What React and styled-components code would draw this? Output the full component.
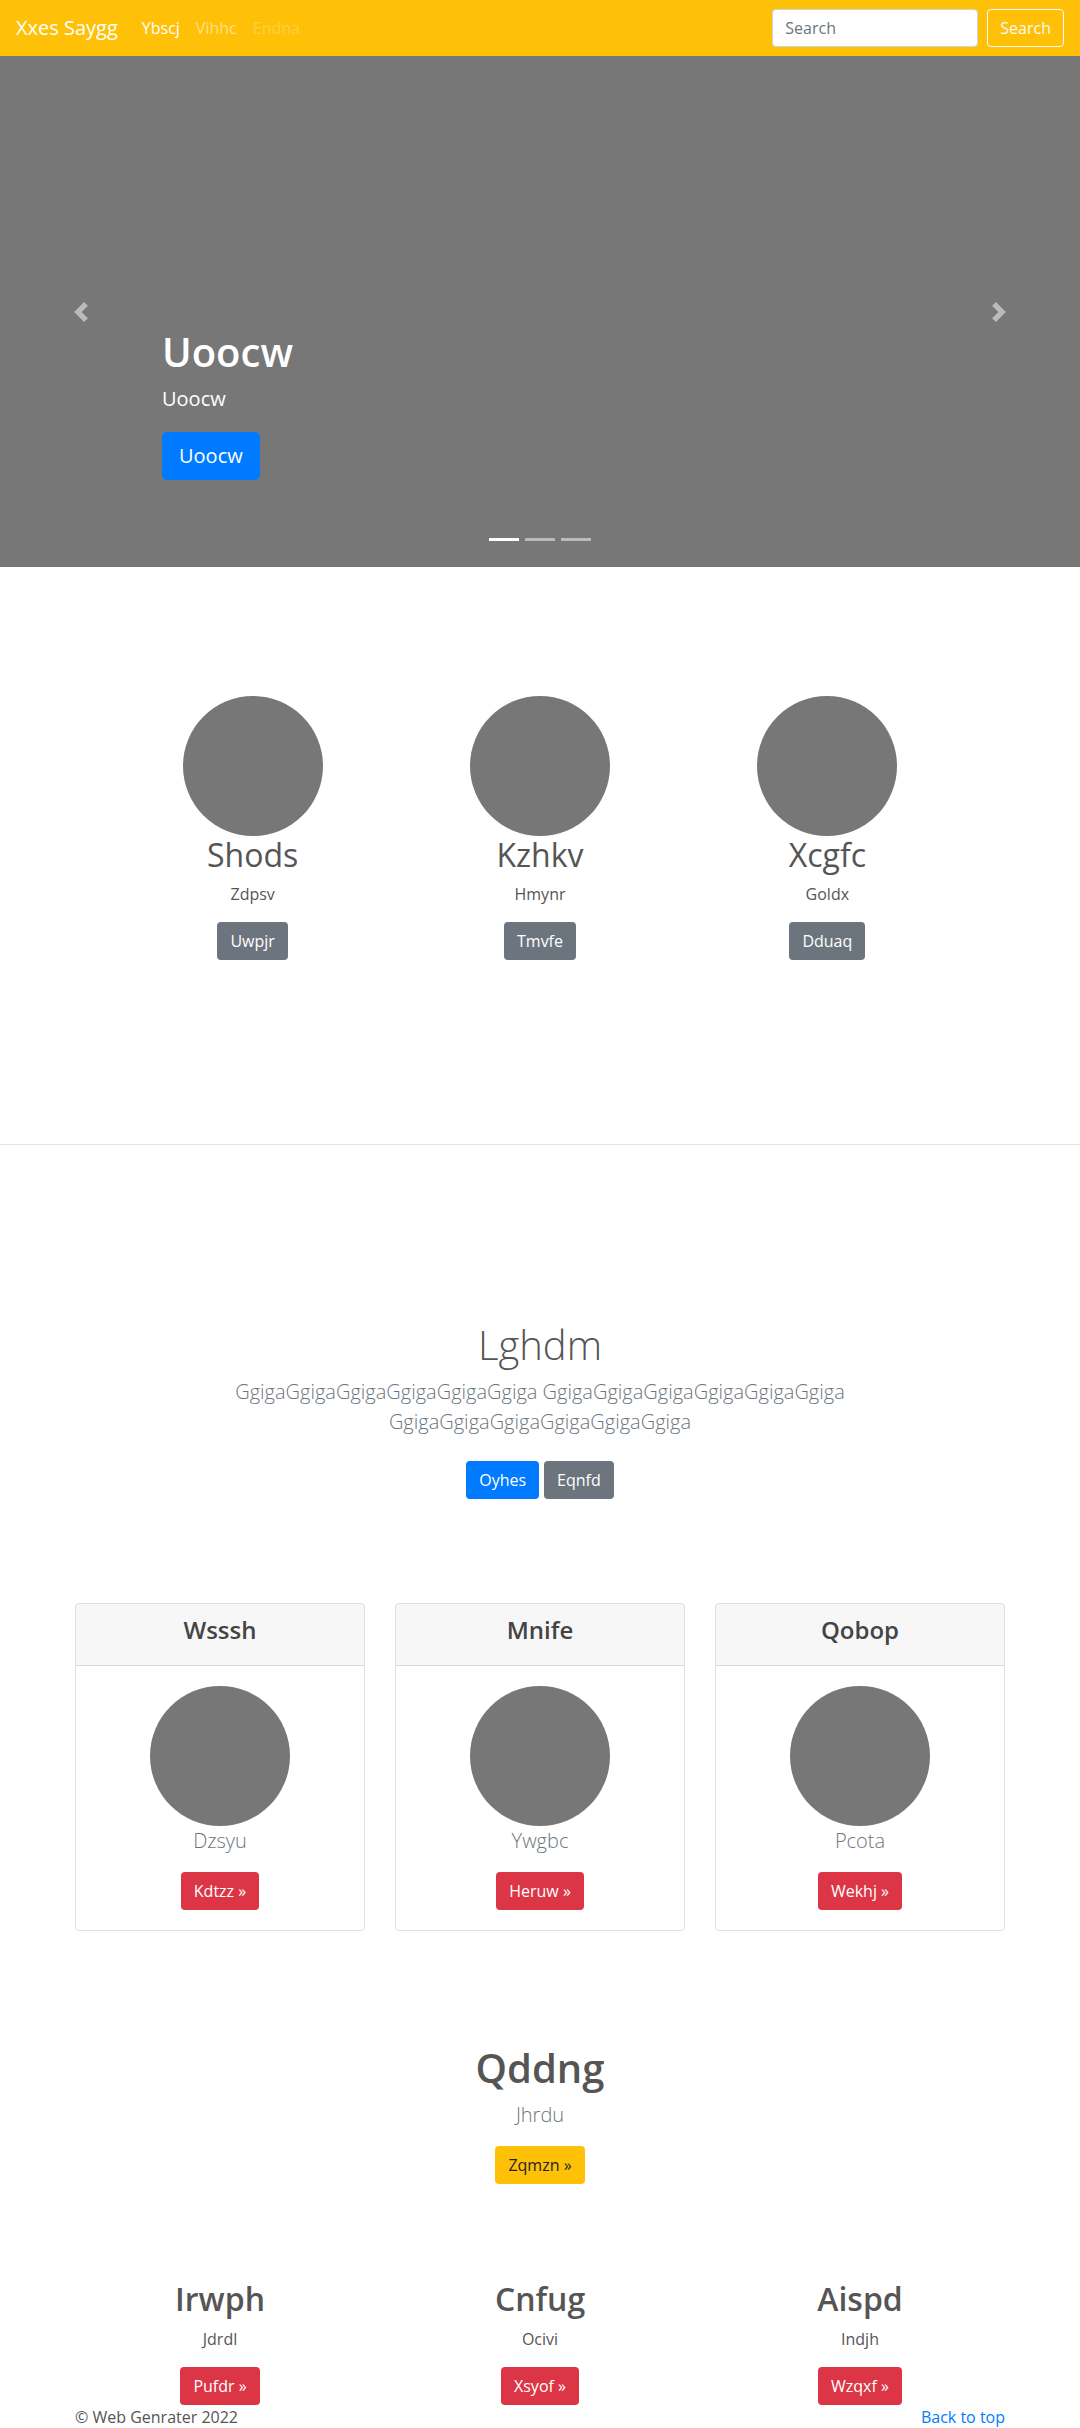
import React from 'react';
import styled, { createGlobalStyle } from 'styled-components';

const GlobalStyle = createGlobalStyle`
  body {
    margin: 0;
    font-family: "Open Sans", "Noto Sans", "Liberation Sans", sans-serif;
    color: #555;
    background: #fff;
  }
  * { box-sizing: border-box; }
`;

const variants = {
  primary: { bg: '#007bff', fg: '#fff' },
  secondary: { bg: '#6c757d', fg: '#fff' },
  danger: { bg: '#dc3545', fg: '#fff' },
  warning: { bg: '#ffc107', fg: '#212529' },
};

const App = () => {
  return (
    <>
      <GlobalStyle />
      <Navbar>
        <Brand href="#">Xxes Saygg</Brand>
        <NavLinks>
          <NavLink href="#" $state="active">Ybscj</NavLink>
          <NavLink href="#">Vihhc</NavLink>
          <NavLink href="#" $state="disabled">Endna</NavLink>
        </NavLinks>
        <SearchForm onSubmit={(e) => e.preventDefault()}>
          <SearchInput type="text" placeholder="Search" />
          <OutlineButton type="submit">Search</OutlineButton>
        </SearchForm>
      </Navbar>

      <Carousel>
        <Control>
          <svg width="20" height="20" viewBox="0 0 8 8" fill="#fff">
            <path d="M5.25 0l-4 4 4 4 1.5-1.5L4.25 4l2.5-2.5L5.25 0z" />
          </svg>
        </Control>
        <Caption>
          <CaptionTitle>Uoocw</CaptionTitle>
          <CaptionText>Uoocw</CaptionText>
          <Button $variant="primary" $size="lg">Uoocw</Button>
        </Caption>
        <Control>
          <svg width="20" height="20" viewBox="0 0 8 8" fill="#fff">
            <path d="M2.75 0l-1.5 1.5L3.75 4l-2.5 2.5L2.75 8l4-4-4-4z" />
          </svg>
        </Control>
        <Indicators>
          <Indicator $active />
          <Indicator />
          <Indicator />
        </Indicators>
      </Carousel>

      <Marketing>
        {[
          ['Shods', 'Zdpsv', 'Uwpjr'],
          ['Kzhkv', 'Hmynr', 'Tmvfe'],
          ['Xcgfc', 'Goldx', 'Dduaq'],
        ].map(([name, sub, btn]) => (
          <Feature key={name}>
            <Circle />
            <FeatureName>{name}</FeatureName>
            <FeatureText>{sub}</FeatureText>
            <Button $variant="secondary">{btn}</Button>
          </Feature>
        ))}
      </Marketing>

      <Divider />

      <Jumbo>
        <JumboTitle>Lghdm</JumboTitle>
        <Lead>
          GgigaGgigaGgigaGgigaGgigaGgiga GgigaGgigaGgigaGgigaGgigaGgiga
          <br />
          GgigaGgigaGgigaGgigaGgigaGgiga
        </Lead>
        <ButtonRow>
          <Button $variant="primary">Oyhes</Button>
          <Button $variant="secondary">Eqnfd</Button>
        </ButtonRow>
      </Jumbo>

      <Cards>
        {[
          ['Wsssh', 'Dzsyu', 'Kdtzz'],
          ['Mnife', 'Ywgbc', 'Heruw'],
          ['Qobop', 'Pcota', 'Wekhj'],
        ].map(([title, sub, btn]) => (
          <Card key={title}>
            <CardHeader>
              <CardTitle>{title}</CardTitle>
            </CardHeader>
            <CardBody>
              <Circle />
              <CardLead>{sub}</CardLead>
              <Button $variant="danger">{btn} &raquo;</Button>
            </CardBody>
          </Card>
        ))}
      </Cards>

      <Callout>
        <CalloutTitle>Qddng</CalloutTitle>
        <CardLead>Jhrdu</CardLead>
        <Button $variant="warning">Zqmzn &raquo;</Button>
      </Callout>

      <Columns>
        {[
          ['Irwph', 'Jdrdl', 'Pufdr'],
          ['Cnfug', 'Ocivi', 'Xsyof'],
          ['Aispd', 'Indjh', 'Wzqxf'],
        ].map(([name, sub, btn]) => (
          <Column key={name}>
            <ColumnTitle>{name}</ColumnTitle>
            <FeatureText>{sub}</FeatureText>
            <Button $variant="danger">{btn} &raquo;</Button>
          </Column>
        ))}
      </Columns>

      <Footer>
        <FooterText>&copy; Web Genrater 2022</FooterText>
        <FooterLink href="#">Back to top</FooterLink>
      </Footer>
    </>
  );
};

export default App;

const Navbar = styled.nav`
  display: flex;
  align-items: center;
  height: 56px;
  padding: 0 16px;
  background: #ffc107;
`;

const Brand = styled.a`
  font-size: 20px;
  line-height: 30px;
  color: #fff;
  margin-right: 16px;
  text-decoration: none;
`;

const NavLinks = styled.div`
  display: flex;
  flex: 1;
`;

const NavLink = styled.a`
  padding: 8px;
  font-size: 16px;
  line-height: 24px;
  text-decoration: none;
  color: ${(p) =>
    p.$state === 'active'
      ? '#fff'
      : p.$state === 'disabled'
      ? 'rgba(255,255,255,.25)'
      : 'rgba(255,255,255,.5)'};
`;

const SearchForm = styled.form`
  display: flex;
  gap: 9px;
  margin: 0;
`;

const SearchInput = styled.input`
  width: 206px;
  height: 38px;
  padding: 6px 12px;
  border: 1px solid #ced4da;
  border-radius: 4px;
  font-family: inherit;
  font-size: 16px;
  color: #495057;
  &::placeholder {
    color: #6c757d;
  }
`;

const OutlineButton = styled.button`
  height: 38px;
  padding: 6px 12px;
  border: 1px solid #f8f9fa;
  border-radius: 4px;
  background: transparent;
  color: #f8f9fa;
  font-family: inherit;
  font-size: 16px;
  line-height: 24px;
`;

const Carousel = styled.section`
  position: relative;
  display: flex;
  height: 511px;
  background: #777;
`;

const Control = styled.div`
  width: 15%;
  display: flex;
  align-items: center;
  justify-content: center;
  opacity: 0.5;
`;

const Caption = styled.div`
  flex: 1;
  display: flex;
  flex-direction: column;
  justify-content: flex-end;
  align-items: flex-start;
  padding-bottom: 87px;
  color: #fff;
`;

const CaptionTitle = styled.h1`
  margin: 0 0 8px;
  font-size: 40px;
  line-height: 1.2;
  font-weight: 600;
`;

const CaptionText = styled.p`
  margin: 0 0 18px;
  font-size: 20px;
  line-height: 30px;
`;

const Indicators = styled.ol`
  position: absolute;
  left: 0;
  right: 0;
  bottom: 0;
  display: flex;
  justify-content: center;
  margin: 0 0 16px;
  padding: 0;
  list-style: none;
`;

const Indicator = styled.li`
  width: 30px;
  height: 23px;
  margin: 0 3px;
  padding: 10px 0;
  background: ${(p) => (p.$active ? '#fff' : 'rgba(255,255,255,.5)')};
  background-clip: content-box;
`;

const Button = styled.a`
  display: inline-block;
  padding: ${(p) => (p.$size === 'lg' ? '8px 16px' : '6px 12px')};
  font-size: ${(p) => (p.$size === 'lg' ? '20px' : '16px')};
  line-height: ${(p) => (p.$size === 'lg' ? '30px' : '24px')};
  border: 1px solid transparent;
  border-radius: ${(p) => (p.$size === 'lg' ? '5px' : '4px')};
  background: ${(p) => variants[p.$variant].bg};
  color: ${(p) => variants[p.$variant].fg};
  text-decoration: none;
  cursor: pointer;
`;

const Marketing = styled.section`
  display: grid;
  grid-template-columns: repeat(3, 1fr);
  width: 862px;
  margin: 0 auto;
  padding: 129px 0 184px;
  text-align: center;
`;

const Feature = styled.div`
  display: flex;
  flex-direction: column;
  align-items: center;
`;

const Circle = styled.div`
  width: 140px;
  height: 140px;
  border-radius: 50%;
  background: #777;
  margin: 0 auto;
`;

const FeatureName = styled.h2`
  margin: 0 0 8px;
  font-size: 32px;
  line-height: 1.2;
  font-weight: 400;
`;

const FeatureText = styled.p`
  margin: 0 0 16px;
  font-size: 16px;
  line-height: 24px;
`;

const Divider = styled.hr`
  margin: 0;
  border: 0;
  border-top: 1px solid #e5e5e5;
`;

const Jumbo = styled.section`
  padding-top: 176px;
  text-align: center;
`;

const JumboTitle = styled.h1`
  margin: 0 0 8px;
  font-size: 40px;
  line-height: 1.2;
  font-weight: 300;
`;

const Lead = styled.p`
  margin: 0 0 24px;
  font-size: 20px;
  line-height: 30px;
  font-weight: 300;
  color: #6c757d;
`;

const ButtonRow = styled.div`
  display: flex;
  justify-content: center;
  gap: 5px;
`;

const Cards = styled.section`
  display: grid;
  grid-template-columns: repeat(3, 1fr);
  gap: 30px;
  width: 960px;
  margin: 104px auto 0;
  padding: 0 15px;
`;

const Card = styled.div`
  border: 1px solid rgba(0, 0, 0, 0.125);
  border-radius: 4px;
  overflow: hidden;
`;

const CardHeader = styled.div`
  padding: 12px 20px;
  background: rgba(0, 0, 0, 0.03);
  border-bottom: 1px solid rgba(0, 0, 0, 0.125);
  text-align: center;
`;

const CardTitle = styled.h4`
  margin: 0 0 8px;
  font-size: 24px;
  line-height: 1.2;
  font-weight: 600;
  color: #444;
`;

const CardBody = styled.div`
  padding: 20px;
  text-align: center;
`;

const CardLead = styled.p`
  margin: 0 0 16px;
  font-size: 20px;
  line-height: 30px;
  font-weight: 300;
  color: #6c757d;
`;

const Callout = styled.section`
  padding-top: 113px;
  text-align: center;
`;

const CalloutTitle = styled.h1`
  margin: 0 0 8px;
  font-size: 40px;
  line-height: 1.2;
  font-weight: 600;
`;

const Columns = styled.section`
  display: grid;
  grid-template-columns: repeat(3, 1fr);
  width: 960px;
  margin: 0 auto;
  padding-top: 96px;
  text-align: center;
`;

const Column = styled.div`
  display: flex;
  flex-direction: column;
  align-items: center;
`;

const ColumnTitle = styled.h2`
  margin: 0 0 8px;
  font-size: 32px;
  line-height: 1.2;
  font-weight: 600;
`;

const Footer = styled.footer`
  display: flex;
  justify-content: space-between;
  width: 960px;
  margin: 0 auto;
  padding: 0 15px;
  font-size: 16px;
  line-height: 24px;
`;

const FooterText = styled.p`
  margin: 0;
`;

const FooterLink = styled.a`
  color: #007bff;
  text-decoration: none;
`;
